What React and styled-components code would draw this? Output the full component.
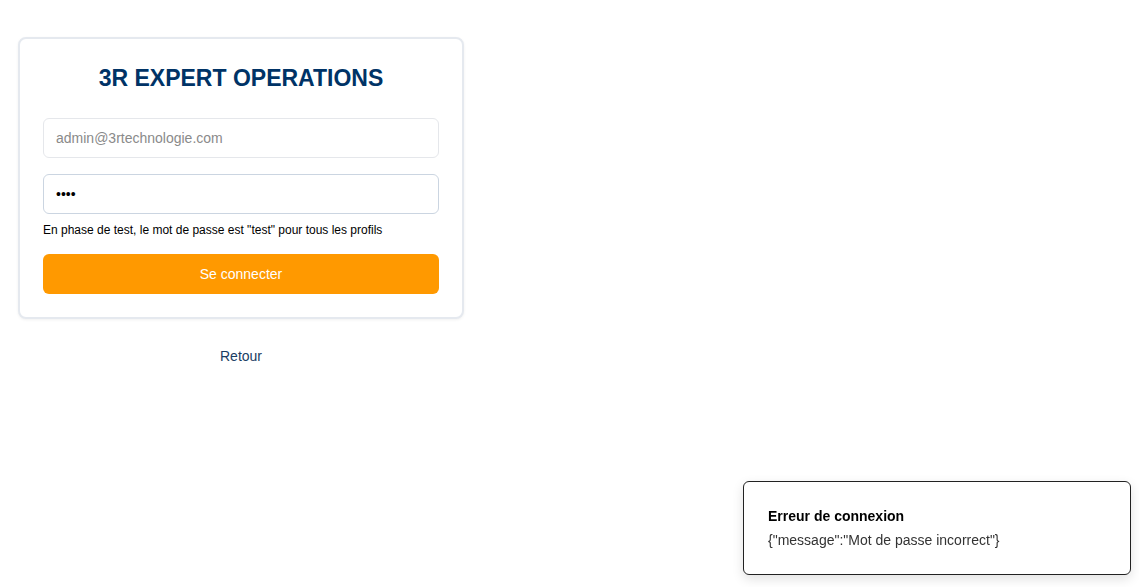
import React from 'react'
import styled, { createGlobalStyle } from 'styled-components';

const GlobalStyle = createGlobalStyle`
  body {
    margin: 0;
    background: #ffffff;
    font-family: "Liberation Sans", Arial, sans-serif;
  }
`;

const Page = styled.div`
  padding: 37px 18px;
  width: 446px;
`;

const Card = styled.div`
  box-sizing: border-box;
  width: 446px;
  padding: 23px;
  border: 2px solid #e5e9ef;
  border-radius: 8px;
  box-shadow: 0 1px 3px rgba(0, 0, 0, 0.06);
  background: #fff;
`;

const Title = styled.h1`
  margin: 0 0 24px;
  text-align: center;
  font-size: 23px;
  line-height: 32px;
  font-weight: bold;
  color: #003366;
`;

const Input = styled.input`
  box-sizing: border-box;
  display: block;
  width: 100%;
  height: 40px;
  padding: 0 12px;
  border: 1px solid ${p => (p.$active ? '#cbd5e1' : '#e5e7eb')};
  border-radius: 6px;
  font-family: inherit;
  font-size: 14px;
  color: #000;
  outline: none;
  & + & {
    margin-top: 16px;
  }
  &::placeholder {
    color: #8a8a8a;
  }
`;

const Hint = styled.p`
  margin: 8px 0 16px;
  font-size: 12px;
  line-height: 16px;
  color: #000;
`;

const Button = styled.button`
  display: block;
  width: 100%;
  height: 40px;
  border: none;
  border-radius: 6px;
  background: #ff9900;
  color: #fff;
  font-family: inherit;
  font-size: 14px;
`;

const BackLink = styled.a`
  display: block;
  margin-top: 27px;
  text-align: center;
  font-size: 14px;
  line-height: 20px;
  color: #1a3d63;
  text-decoration: none;
`;

const Toast = styled.div`
  position: fixed;
  right: 8px;
  bottom: 12px;
  box-sizing: border-box;
  width: 388px;
  padding: 24px;
  border: 1px solid #222;
  border-radius: 6px;
  background: #fff;
  box-shadow: 0 4px 12px rgba(0, 0, 0, 0.12);
`;

const ToastTitle = styled.div`
  font-size: 14px;
  line-height: 20px;
  font-weight: bold;
  color: #000;
`;

const ToastMessage = styled.div`
  margin-top: 4px;
  font-size: 14px;
  line-height: 20px;
  color: #333;
`;

export default function App() {
  return (
    <>
      <GlobalStyle />
      <Page>
        <Card>
          <Title>3R EXPERT OPERATIONS</Title>
          <Input type="email" placeholder="admin@3rtechnologie.com" />
          <Input $active type="password" defaultValue="test" />
          <Hint>En phase de test, le mot de passe est "test" pour tous les profils</Hint>
          <Button>Se connecter</Button>
        </Card>
        <BackLink href="#">Retour</BackLink>
      </Page>
      <Toast>
        <ToastTitle>Erreur de connexion</ToastTitle>
        <ToastMessage>{'{"message":"Mot de passe incorrect"}'}</ToastMessage>
      </Toast>
    </>
  )
}
